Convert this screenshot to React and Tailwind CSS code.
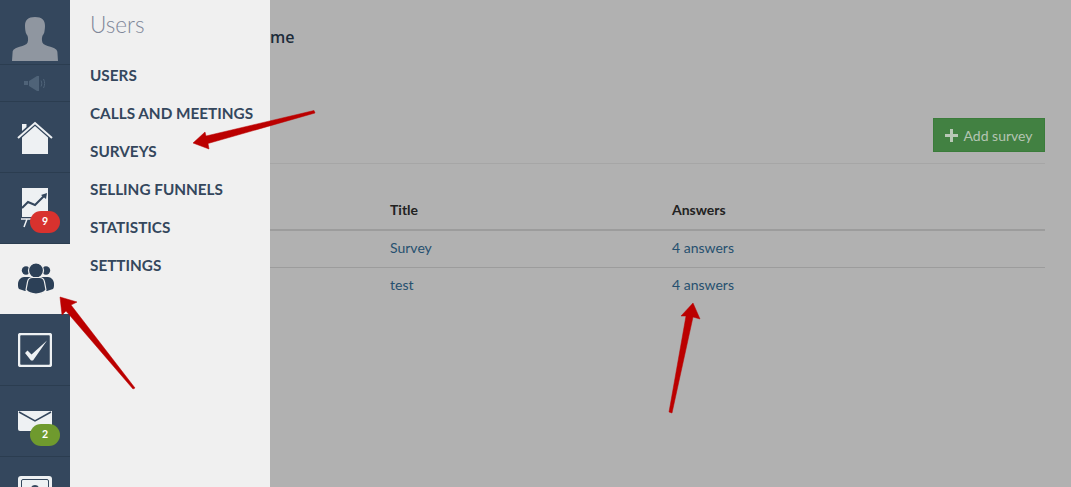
const Row = ({ h = "h-[71px]", active, children }) => (
  <div className={`${h} relative flex shrink-0 items-center justify-center ${active ? "bg-[#f0f0f0]" : "border-b border-[#2b3d50]"}`}>{children}</div>
);

const Badge = ({ color, children }) => (
  <span className={`absolute left-[30px] top-[38px] flex h-[22px] w-[30px] items-center justify-center rounded-[11px] text-[10.500px] font-bold text-white ${color}`}>{children}</span>
);

const menu = ["USERS", "CALLS AND MEETINGS", "SURVEYS", "SELLING FUNNELS", "STATISTICS", "SETTINGS"];

export default function App() {
  return (
    <div className="relative flex h-[487px] w-[1071px] overflow-hidden bg-[#b1b1b1] font-['Lato','Open_Sans',sans-serif]">
      <aside className="flex w-[70px] shrink-0 flex-col bg-[#34475d]">
        <Row h="h-[65px]">
          <svg width="46" height="44" viewBox="0 0 46 51" preserveAspectRatio="none" className="mt-[14px]">
            <path fill="#8f96a0" d="M23 0c-7 0-10 4-10 10 0 2 .2 5 .6 7 .3 2 1 3 1.800 4.500.7 2 1 5 .2 8-1 2.500-4 3.500-8 5-4 1.500-7 3-7 6.500L0 51h46l-.6-10c0-3.500-3-5-7-6.500-4-1.500-7-2.500-8-5-.8-3-.5-6 .2-8 .8-1.500 1.500-2.500 1.800-4.500.4-2 .6-5 .6-7C33 4 30 0 23 0z" />
          </svg>
        </Row>
        <Row h="h-[37px]">
          <svg width="22" height="15" viewBox="0 0 22 15" className="mr-[1px]">
            <path fill="#4f6378" d="M0 5h4v4H0zM5 5l8-5h2v15h-2L5 10z" />
            <path fill="none" stroke="#4f6378" d="M17 4.500c1 2 1 4 0 6M19.500 3c1.500 3 1.500 6 0 9" />
          </svg>
        </Row>
        <Row>
          <svg width="36" height="34" viewBox="0 0 36 34" className="mt-[1px]">
            <path fill="#eef1f3" d="M5 16.500 18 5l13 11.500V33H5zM5 3h4.500v3L5 10z" />
            <path fill="none" stroke="#eef1f3" strokeWidth="2" d="M1 17 18 2l17 15" />
          </svg>
        </Row>
        <Row>
          <svg width="30" height="40" viewBox="0 0 30 40" className="mr-[5px] mt-[0px]">
            <path fill="#eef1f3" d="M4 0h26v29H4z" />
            <path fill="none" stroke="#34475d" strokeWidth="2" d="M4 20l6-6 7 3 9-9" />
            <path fill="#34475d" d="M23 7l6-2-1 6z" />
            <path fill="none" stroke="#eef1f3" strokeWidth="1.500" d="M3 31h12M9 31l-3 8" />
          </svg>
          <Badge color="bg-[#d8322e]">9</Badge>
        </Row>
        <Row active h="h-[70px]">
          <svg width="36" height="31" viewBox="0 0 36 31" className="ml-[1px] mt-[-1px]">
            <g fill="#2c4057">
              <circle cx="8" cy="7.500" r="4.200" />
              <circle cx="28" cy="7.500" r="4.200" />
              <path d="M0 21c0-4 3-7 6-7h24c3 0 6 3 6 7 0 2 0 4-1 5l-6 2H7l-6-2c-1-1-1-3-1-5z" />
              <g stroke="#f0f0f0" strokeWidth="1.200">
                <circle cx="18" cy="7.500" r="7.500" />
                <path d="M8 27l1.500-8c.5-3 3-4.500 5-4.500h7c2 0 4.500 1.500 5 4.500l1.500 8c-2.500 3-6 4-10 4s-7.500-1-10-4z" />
              </g>
            </g>
          </svg>
        </Row>
        <Row h="h-[72px]">
          <svg width="34" height="34" viewBox="0 0 34 34" className="mt-[1px]">
            <rect x="1" y="1" width="32" height="32" rx="2" fill="none" stroke="#eef1f3" strokeWidth="2.500" />
            <path fill="#eef1f3" d="M7 20l2.500-2.500 4 4L29 7.500 15 27.500h-2z" />
          </svg>
        </Row>
        <Row>
          <svg width="34" height="20" viewBox="0 0 34 20">
            <path fill="#eef1f3" d="M0 0h34v18a2 2 0 0 1-2 2H2a2 2 0 0 1-2-2z" />
            <path fill="none" stroke="#34475d" strokeWidth="1.500" d="M1 1l16 9L33 1" />
          </svg>
          <Badge color="bg-[#6f9a2e]">2</Badge>
        </Row>
        <div className="flex shrink-0 justify-center pt-[19px]">
          <span className="h-[34px] w-[34px] shrink-0 rounded-[3px] bg-[#eef1f3] p-[3px]">
            <span className="flex h-full justify-center rounded-[2px] border border-[#34475d] pt-[5px]">
              <span className="h-[8px] w-[8px] rounded-full bg-[#34475d]" />
            </span>
          </span>
        </div>
      </aside>

      <nav className="w-[200px] shrink-0 bg-[#f0f0f0] pl-[20px]">
        <h2 className="pt-[11px] text-[22.500px] leading-[28px] font-light text-[#7f8799]">Users</h2>
        <ul className="mt-[17px]">
          {menu.map((m) => (
            <li key={m} className="h-[38px] text-[15.300px] leading-[38px] font-bold text-[#34475d] whitespace-nowrap">{m}</li>
          ))}
        </ul>
      </nav>

      <main className="flex-1 pr-[26px]">
        <h1 className="pt-[25px] font-['Open_Sans',sans-serif] text-[16px] leading-[24px] font-semibold text-[#1c2c3a]">me</h1>
        <div className="mt-[69px] flex justify-end">
          <button className="flex h-[34px] w-[112px] items-center justify-center gap-[5px] border border-[#3b7c3b] bg-[#428142] text-[14px] text-[#b5c5b2]">
            <svg width="13" height="13" viewBox="0 0 13 13"><path fill="#b9c8b6" d="M5 0h3v5h5v3H8v5H5V8H0V5h5z" /></svg>
            Add survey
          </button>
        </div>
        <div className="mt-[11px] border-t border-[#a6a6a6]" />
        <div className="mt-[36px] grid h-[31px] grid-cols-[120px_282px_1fr] border-b-2 border-[#9c9c9c] text-[14px] leading-[20px] font-bold text-[#222]">
          <span />
          <span>Title</span>
          <span>Answers</span>
        </div>
        <div className="grid h-[37px] grid-cols-[120px_282px_1fr] items-center border-b border-[#9c9c9c] pb-[4px] text-[14px] text-[#26506f]">
          <span />
          <span>Survey</span>
          <span>4 answers</span>
        </div>
        <div className="grid h-[37px] grid-cols-[120px_282px_1fr] items-center pb-[4px] text-[14px] text-[#26506f]">
          <span />
          <span>test</span>
          <span>4 answers</span>
        </div>
      </main>

      <svg className="pointer-events-none absolute left-0 top-0" width="1071" height="487" viewBox="0 0 1071 487">
        <g fill="#bb0000" stroke="#bb0000" strokeWidth="0.500" strokeLinejoin="round">
          <path d="M314 110.500 315 113 208 143.500 209 149 193 143 205 132 206 136z" />
          <path d="M135 388 133 389 66 311 62 315 60 297 77 302 71 305z" />
          <path d="M669 412 686 316 681 316 693 303 700 319 693 317 672 413z" />
        </g>
      </svg>
    </div>
  );
}
